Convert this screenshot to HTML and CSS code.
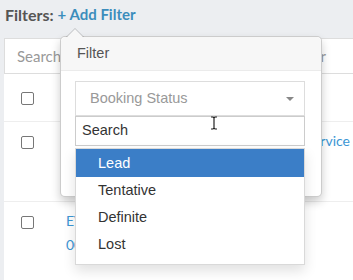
FILE: index.html
```html
<!DOCTYPE html>
<html lang="en">
<head>
    <meta charset="UTF-8">
    <meta name="viewport" content="width=device-width, initial-scale=1.0">
    <title>Bookings</title>
    <link rel="stylesheet" href="styles.css">
</head>
<body>
    <div class="page">
        <div class="filters-bar">
            <span class="filters-label">Filters:</span>
            <a class="add-filter" href="#">+ Add Filter</a>
        </div>

        <div class="card">
            <div class="search-row">
                <span class="placeholder">Search</span>
                <span class="placeholder">Search Organizer</span>
            </div>

            <div class="row row-head">
                <div class="cell-check"><span class="checkbox"></span></div>
                <div class="cell"></div>
                <div class="cell"></div>
            </div>
            <div class="row">
                <div class="cell-check"><span class="checkbox"></span></div>
                <div class="cell"></div>
                <div class="cell cell-right"><a href="#">Catering Service</a></div>
            </div>
            <div class="row">
                <div class="cell-check"><span class="checkbox"></span></div>
                <div class="cell"><a href="#">EV</a><br><a href="#">00</a></div>
                <div class="cell"></div>
            </div>
        </div>

        <!-- filter popover opened from "+ Add Filter" -->
        <div class="popover">
            <div class="popover-title">Filter</div>
            <div class="popover-body">
                <div class="select-wrap">
                    <div class="select">Booking Status</div>
                    <div class="dropdown">
                        <div class="dd-search">Search</div>
                        <ul class="dd-list">
                            <li class="active">Lead</li>
                            <li>Tentative</li>
                            <li>Definite</li>
                            <li>Lost</li>
                        </ul>
                    </div>
                </div>
                <button class="btn-apply" type="button" aria-label="Apply"></button>
            </div>
        </div>

        <svg class="cursor" width="8" height="14" viewBox="0 0 8 14">
            <path d="M1 1h2l1 1 1-1h2M4 2v10M1 13h2l1-1 1 1h2" fill="none" stroke="#222" stroke-width="1.2"/>
        </svg>
    </div>
</body>
</html>
```

FILE: styles.css
```css
body {
    margin: 0;
    background-color: #eceef1;
    font-family: Lato, "Open Sans", sans-serif;
}
.page {
    position: relative;
    height: 280px;
    overflow: hidden;
}
.filters-bar {
    height: 28px;
    display: flex;
    align-items: center;
    gap: 4px;
    padding-left: 5px;
    font-size: 15px;
    font-weight: bold;
    color: #555;
}
.filters-label {
    font-size: 16px;
}
.add-filter {
    color: #3c8dbc;
    text-decoration: none;
}
.card {
    margin: 10px 0 0 4px;
    background-color: #fff;
    height: 260px;
}
.search-row {
    height: 36px;
    box-sizing: border-box;
    display: flex;
    justify-content: space-between;
    align-items: center;
    padding: 0 27px 0 12px;
    border: 1px solid #dddddd;
    border-right: none;
    font-size: 15px;
    color: #999;
}
.row {
    display: grid;
    grid-template-columns: 62px 1fr 1fr;
    border-bottom: 1px solid #eeeeee;
    font-size: 14px;
    line-height: 24px;
    padding: 7px 0 0;
    min-height: 72px;
}
.row-head {
    min-height: 0;
    height: 47px;
    padding: 0;
    align-items: center;
}
.cell-check {
    padding-left: 17px;
}
.checkbox {
    display: inline-block;
    width: 11px;
    height: 11px;
    border: 1px solid #777;
    border-radius: 2px;
    vertical-align: middle;
}
.row a {
    color: #3c96d4;
    text-decoration: none;
}
.cell-right {
    text-align: right;
    padding-right: 3px;
    white-space: nowrap;
}

/* popover */
.popover {
    position: absolute;
    left: 60px;
    top: 36px;
    width: 262px;
    box-sizing: border-box;
    background-color: #fff;
    border: 1px solid rgba(0, 0, 0, 0.2);
    border-radius: 5px;
    box-shadow: 0 5px 10px rgba(0, 0, 0, 0.2);
    font-family: "Liberation Sans", Arial, sans-serif;
    font-size: 14.5px;
}
.popover::before,
.popover::after {
    content: "";
    position: absolute;
    left: 5px;
    border-style: solid;
    border-color: transparent;
    border-width: 0 9px 9px;
}
.popover::before {
    top: -9px;
    border-bottom-color: rgba(0, 0, 0, 0.2);
}
.popover::after {
    top: -8px;
    border-bottom-color: #f7f7f7;
}
.popover-title {
    height: 33px;
    line-height: 33px;
    padding: 0 16px;
    background-color: #f7f7f7;
    border-bottom: 1px solid #ebebeb;
    border-radius: 5px 5px 0 0;
    color: #555;
}
.popover-body {
    padding: 10px 16px 9px 14px;
}
.select-wrap {
    position: relative;
}
.select {
    height: 35px;
    box-sizing: border-box;
    line-height: 33px;
    padding-left: 14px;
    border: 1px solid #dddddd;
    color: #999;
}
.select::after {
    content: "";
    position: absolute;
    right: 11px;
    top: 16px;
    border-style: solid;
    border-color: #888 transparent transparent;
    border-width: 4px 4px 0;
}
.dropdown {
    position: absolute;
    top: 35px;
    left: 0;
    right: 0;
    z-index: 2;
}
.dd-search {
    height: 30px;
    box-sizing: border-box;
    line-height: 27px;
    padding: 0 6px;
    border: 1px solid #cccccc;
    background-color: #fff;
    color: #333;
}
.dd-list {
    list-style-type: none;
    margin: 2px 0 0;
    padding: 0 0 6px;
    background-color: #fff;
    border: 1px solid rgba(0, 0, 0, 0.15);
    box-shadow: 0 6px 12px rgba(0, 0, 0, 0.12);
}
.dd-list li {
    height: 27px;
    line-height: 27px;
    padding-left: 22px;
    color: #333;
}
.dd-list li.active {
    height: 28px;
    line-height: 28px;
    background-color: #3b7ec7;
    color: #fff;
}
.btn-apply {
    display: block;
    margin-top: 33px;
    height: 38px;
    width: 80px;
    border: none;
    border-radius: 3px;
    background-color: #3f4fa6;
}
.cursor {
    position: absolute;
    left: 210px;
    top: 116px;
    z-index: 3;
}
```
